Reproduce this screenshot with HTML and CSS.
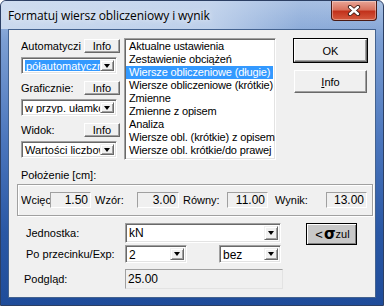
FILE: index.html
```html
<!DOCTYPE html>
<html lang="pl">
<head>
  <meta charset="UTF-8" />
  <title>Formatuj wiersz obliczeniowy i wynik</title>
  <link rel="stylesheet" href="styles.css">
</head>
<body>
  <div class="window">
    <div class="titlebar">
      <span class="title">Formatuj wiersz obliczeniowy i wynik</span>
      <div class="close">
        <svg width="14" height="11" viewBox="0 0 14 11">
          <path d="M3 2 L11 9 M11 2 L3 9" stroke="#3b1a14" stroke-width="4.2" stroke-linecap="round"/>
          <path d="M3 2 L11 9 M11 2 L3 9" stroke="#fff" stroke-width="2.4" stroke-linecap="round"/>
        </svg>
      </div>
    </div>

    <div class="client">
      <div class="top">
        <div class="left">
          <div class="row">
            <span class="lbl clip">Automatyczi</span>
            <button class="btn small">Info</button>
          </div>
          <div class="combo">
            <span class="value"><span class="sel">półautomatyczny</span></span>
            <span class="arrow"></span>
          </div>

          <div class="row">
            <span class="lbl">Graficznie:</span>
            <button class="btn small">Info</button>
          </div>
          <div class="combo">
            <span class="value">w przyp. ułamków</span>
            <span class="arrow"></span>
          </div>

          <div class="row">
            <span class="lbl">Widok:</span>
            <button class="btn small">Info</button>
          </div>
          <div class="combo">
            <span class="value">Wartości liczbowe</span>
            <span class="arrow"></span>
          </div>
        </div>

        <ul class="listbox">
          <li>Aktualne ustawienia</li>
          <li>Zestawienie obciążeń</li>
          <li class="active">Wiersze obliczeniowe (długie)</li>
          <li>Wiersze obliczeniowe (krótkie)</li>
          <li>Zmienne</li>
          <li>Zmienne z opisem</li>
          <li>Analiza</li>
          <li>Wiersze obl. (krótkie) z opisem</li>
          <li>Wiersze obl. krótkie/do prawej</li>
        </ul>

        <div class="actions">
          <button class="btn big default">OK</button>
          <button class="btn big second"><u>I</u>nfo</button>
        </div>
      </div>

      <div class="pos-label">Położenie [cm]:</div>
      <div class="group">
        <span class="cell c1">Wcięcie:</span>
        <span class="edit e1">1.50</span>
        <span class="cell c2">Wzór:</span>
        <span class="edit e2">3.00</span>
        <span class="cell c3">Równy:</span>
        <span class="edit e3">11.00</span>
        <span class="cell c4">Wynik:</span>
        <span class="edit e4">13.00</span>
      </div>

      <div class="bottom">
        <div class="form">
          <span class="lbl">Jednostka:</span>
          <div class="combo wide">
            <span class="value">kN</span>
            <span class="arrow"></span>
          </div>

          <span class="lbl">Po przecinku/Exp:</span>
          <div class="pair">
            <div class="combo short">
              <span class="value">2</span>
              <span class="arrow"></span>
            </div>
            <div class="combo short">
              <span class="value">bez</span>
              <span class="arrow"></span>
            </div>
          </div>

          <span class="lbl shift">Podgląd:</span>
          <span class="preview">25.00</span>
        </div>

        <button class="sigma">&lt;<span class="s">σ</span><sub>zul</sub></button>
      </div>
    </div>
  </div>
</body>
</html>
```

FILE: styles.css
```css
body {
  margin: 0;
  font-family: "Liberation Sans", Arial, sans-serif;
  font-size: 11px;
  color: #000;
  background: #fff;
}

/* window frame */
.window {
  width: 384px;
  height: 306px;
  box-sizing: border-box;
  border: 1px solid #2c3f63;
  border-radius: 6px 6px 0 0;
  background: linear-gradient(to bottom, #a9c1e3 0, #7b9ed3 40px, #4b76bd 140px, #2a58a5 230px, #1f4c9a 100%);
  display: flex;
  flex-direction: column;
  overflow: hidden;
}

.titlebar {
  height: 28px;
  display: flex;
  align-items: flex-start;
  background: linear-gradient(to right, rgba(214,226,242,0.85) 0, rgba(206,220,240,0.75) 210px, rgba(160,186,224,0.2) 300px, rgba(120,150,205,0) 100%);
}

.title {
  font-family: "Open Sans", "Noto Sans", sans-serif;
  font-size: 12px;
  margin: 6px 0 0 7px;
  color: #000;
  letter-spacing: -0.1px;
  text-shadow: 0 0 6px #fff;
}

.close {
  margin-left: auto;
  margin-right: 6px;
  width: 46px;
  height: 20px;
  box-sizing: border-box;
  border: 1px solid #4a1a14;
  border-top: none;
  border-radius: 0 0 4px 4px;
  background: linear-gradient(to bottom, #e8a596 0, #d9735f 45%, #c2321c 55%, #d55a3f 100%);
  box-shadow: inset 0 0 0 1px rgba(255,255,255,0.35);
  display: flex;
  justify-content: center;
  align-items: center;
}

.client {
  flex: 1;
  margin: 0 7px 7px 7px;
  border: 1px solid #43628f;
  background: #f0f0f0;
}

/* classic controls */
.btn {
  font-family: inherit;
  font-size: 11px;
  background: #f0f0f0;
  border: 1px solid;
  border-color: #fff #696969 #696969 #fff;
  box-shadow: inset -1px -1px 0 #a0a0a0;
  padding: 0;
  color: #000;
}

.combo {
  display: flex;
  box-sizing: border-box;
  background: #fff;
  border: 1px solid;
  border-color: #a0a0a0 #fff #fff #a0a0a0;
  box-shadow: inset 1px 1px 0 #696969, inset -1px -1px 0 #e3e3e3;
  padding: 2px 2px 2px 2px;
}

.combo .value {
  flex: 1;
  overflow: hidden;
  white-space: nowrap;
  line-height: 12px;
  padding-left: 1px;
}

.combo .sel {
  background: #3399ff;
  color: #fff;
  display: block;
  padding-left: 1px;
}

.arrow {
  width: 14px;
  box-sizing: border-box;
  background: #f0f0f0;
  border: 1px solid;
  border-color: #f0f0f0 #696969 #696969 #f0f0f0;
  box-shadow: inset 1px 1px 0 #fff, inset -1px -1px 0 #a0a0a0;
  position: relative;
}

.arrow::after {
  content: "";
  position: absolute;
  left: 3px;
  top: 50%;
  margin-top: -2px;
  border-left: 3.5px solid transparent;
  border-right: 3.5px solid transparent;
  border-top: 4px solid #000;
}

/* top section */
.top {
  display: flex;
  margin: 8px 0 0 12px;
  height: 122px;
}

.left {
  width: 99px;
  padding-top: 1px;
}

.row {
  height: 14px;
  display: flex;
  align-items: center;
  justify-content: space-between;
}

.lbl {
  white-space: nowrap;
}

.clip {
  width: 62px;
  overflow: hidden;
}

.btn.small {
  width: 36px;
  height: 14px;
  line-height: 11px;
}

.left .combo {
  width: 96px;
  height: 17px;
  margin: 4px 0 7px;
}

.listbox {
  list-style: none;
  margin: 0 0 0 4px;
  padding: 1px 0 0;
  width: 152px;
  height: 122px;
  box-sizing: border-box;
  background: #fff;
  border: 1px solid;
  border-color: #a0a0a0 #fff #fff #a0a0a0;
  box-shadow: inset 1px 1px 0 #696969, inset -1px -1px 0 #e3e3e3;
  overflow: hidden;
}

.listbox li {
  height: 13px;
  line-height: 13px;
  padding-left: 3px;
  margin: 0 2px 0 1px;
  white-space: nowrap;
  letter-spacing: -0.15px;
}

.listbox li.active {
  background: #3399ff;
  color: #fff;
}

.actions {
  margin-left: 18px;
  width: 73px;
  display: flex;
  flex-direction: column;
}

.btn.big {
  width: 73px;
  height: 23px;
  margin-top: 1px;
}

.btn.default {
  outline: 1px solid #000;
  border-color: #fff #696969 #696969 #fff;
}

.btn.second {
  margin-top: 8px;
}

/* position group */
.pos-label {
  margin: 9px 0 0 12px;
  height: 13px;
  line-height: 13px;
}

.group {
  margin: 2px 0 0 8px;
  width: 356px;
  height: 32px;
  box-sizing: border-box;
  border: 1px solid #a0a0a0;
  box-shadow: inset 1px 1px 0 #fff, 1px 1px 0 #fff;
  display: flex;
  align-items: center;
  padding-left: 3px;
}

.cell {
  white-space: nowrap;
  overflow: hidden;
  height: 16px;
  line-height: 16px;
}

.c1 { width: 29px; }
.c2 { width: 42px; padding-left: 4px; }
.c3 { width: 44px; padding-left: 4px; }
.c4 { width: 51px; padding-left: 7px; }

.edit {
  height: 16px;
  box-sizing: border-box;
  border: 1px solid;
  border-color: #a0a0a0 #fff #fff #a0a0a0;
  text-align: right;
  line-height: 14px;
  padding-right: 2px;
  font-size: 12px;
}

.e1 { width: 41px; }
.e2 { width: 42px; }
.e3 { width: 41px; }
.e4 { width: 41px; }

/* bottom section */
.bottom {
  display: flex;
  align-items: flex-start;
  margin: 7px 0 0 17px;
}

.form {
  display: grid;
  grid-template-columns: 99px 156px;
  grid-template-rows: 20px 18px 20px;
  row-gap: 2px;
  align-items: center;
}

.form .lbl:nth-of-type(3) {
  margin-top: 7px;
}

.shift {
  margin-left: -2px;
}

.combo.wide {
  height: 20px;
  padding: 2px;
}

.combo.wide .value,
.combo.short .value {
  line-height: 14px;
  font-size: 12px;
}

.pair {
  display: flex;
  justify-content: space-between;
}

.combo.short {
  width: 62px;
  height: 18px;
  padding: 2px;
}

.preview {
  width: 158px;
  height: 20px;
  margin-top: 7px;
  box-sizing: border-box;
  border: 1px solid;
  border-color: #a0a0a0 #e3e3e3 #e3e3e3 #a0a0a0;
  line-height: 18px;
  padding-left: 2px;
  font-size: 12px;
}

.sigma {
  margin-left: 25px;
  width: 51px;
  height: 22px;
  background: #c8c8c8;
  border: 1px solid #000;
  box-shadow: inset 1px 1px 0 #fff, inset -1px -1px 0 #808080;
  font-family: inherit;
  font-size: 13px;
  padding: 0 0 0 2px;
  display: flex;
  align-items: center;
  justify-content: center;
  color: #000;
}

.sigma .s {
  font-family: "DejaVu Sans", sans-serif;
  font-size: 15px;
  font-weight: bold;
  margin-left: 1px;
}

.sigma sub {
  font-size: 11px;
  vertical-align: -4px;
  line-height: 0;
}
```
